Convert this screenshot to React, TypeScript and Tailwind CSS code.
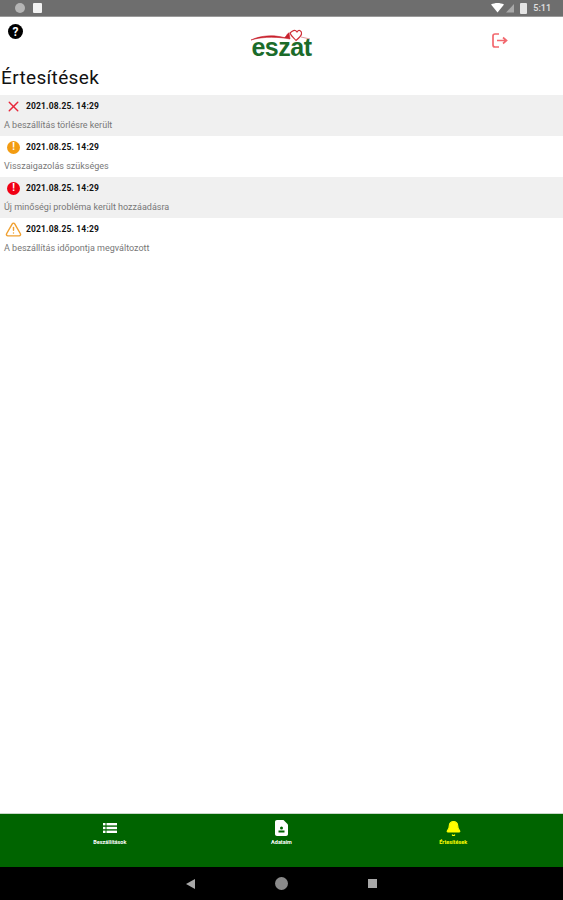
import { AlertTriangle, Bell, X } from "lucide-react"

const font = "font-['Roboto',sans-serif]"

const rows = [
  { icon: "x", text: "A beszállítás törlésre került", bg: "bg-[#f0f0f0]" },
  { icon: "orange", text: "Visszaigazolás szükséges", bg: "bg-white" },
  { icon: "red", text: "Új minőségi probléma került hozzáadásra", bg: "bg-[#f0f0f0]" },
  { icon: "warn", text: "A beszállítás időpontja megváltozott", bg: "bg-white" },
]

function RowIcon({ kind }: { kind: string }) {
  if (kind === "x") return <X className="h-[17px] w-[17px] text-[#e8263a]" strokeWidth={2} />
  if (kind === "warn") return <AlertTriangle className="h-[17px] w-[17px] text-[#f0a030]" strokeWidth={2} />
  const bg = kind === "orange" ? "bg-[#f39c12]" : "bg-[#f00014]"
  return (
    <div className={`flex h-[13px] w-[13px] items-center justify-center rounded-full text-[10px] leading-none font-bold text-white ${bg}`}>
      !
    </div>
  )
}

function Logo() {
  return (
    <div className="relative flex h-[33px] w-[62px] flex-col items-center justify-end">
      <svg className="absolute top-0 left-0" width="62" height="18" viewBox="0 0 62 18" fill="none">
        <path d="M1 14C12 9 24 9 34 11.5C36 12 37 7 39 7L40 13C30 11 14 10 1 14Z" fill="#c8202c" stroke="#c8202c" strokeWidth="0.6" />
        <path d="M40 7C42 5 45 3 47 6C49 3 52 5 51.5 8C51 10 49 12 46 14.5C44 12 41 10 40 7Z" stroke="#d0303a" strokeWidth="1.2" />
        <path d="M51 11L60 13" stroke="#e09aa0" strokeWidth="1" />
      </svg>
      <span className="translate-y-[-1px] text-[25px] leading-[22px] font-bold tracking-[-0.5px] text-[#1b6b2a] font-['Liberation_Sans',sans-serif]">eszat</span>
    </div>
  )
}

function ListIcon() {
  return (
    <svg width="14" height="10" viewBox="0 0 14 10" fill="currentColor">
      <rect x="0" y="0" width="2.5" height="2.4" />
      <rect x="3.5" y="0" width="10.5" height="2.4" />
      <rect x="0" y="3.8" width="2.5" height="2.4" />
      <rect x="3.5" y="3.8" width="10.5" height="2.4" />
      <rect x="0" y="7.6" width="2.5" height="2.4" />
      <rect x="3.5" y="7.6" width="10.5" height="2.4" />
    </svg>
  )
}

function DocIcon() {
  return (
    <svg width="13" height="16" viewBox="0 0 13 16">
      <path d="M2 0H8.5L13 4.5V14C13 15.2 12.2 16 11 16H2C0.8 16 0 15.2 0 14V2C0 0.8 0.8 0 2 0Z" fill="#fff" />
      <circle cx="6.5" cy="8" r="1.5" fill="#006400" />
      <rect x="3.5" y="10.5" width="6" height="2" fill="#006400" />
    </svg>
  )
}

function Tab({ icon, label, active }: { icon: React.ReactNode; label: string; active?: boolean }) {
  return (
    <div className={`flex h-[27px] flex-col items-center justify-between ${active ? "text-[#ffff00]" : "text-white"}`}>
      <div className="flex h-[18px] items-center">{icon}</div>
      <span className="text-[5.5px] leading-[7px] font-bold">{label}</span>
    </div>
  )
}

export default function App() {
  return (
    <div className={`flex h-[900px] w-[563px] flex-col overflow-hidden bg-white ${font}`}>
      <div className="flex h-[17px] shrink-0 items-center justify-between border-b border-[#9a9a9a] bg-[#6e6e6e] pr-[12px] pl-[15px]">
        <div className="flex items-center gap-[8px]">
          <div className="h-[10px] w-[10px] rounded-full bg-[#b5b5b5]" />
          <div className="h-[10px] w-[9px] rounded-[1px] bg-[#f2f2f2]" />
        </div>
        <div className="flex items-center gap-[5px]">
          <svg width="24" height="10" viewBox="0 0 24 10">
            <path d="M0 1.5C4 -0.5 9 -0.5 13 1.5L6.5 9.5Z" fill="#fff" />
            <path d="M23 1V9.5H15Z" fill="#a8a8a8" />
          </svg>
          <div className="h-[11px] w-[7px] rounded-[1px] bg-[#e4e4e4]" />
          <span className="ml-[1px] text-[9px] leading-none font-medium text-[#e0e0e0]">5:11</span>
        </div>
      </div>

      <div className="grid h-[49px] shrink-0 grid-cols-3 items-start">
        <div className="pt-[7px] pl-[8px]">
          <div className="flex h-[15px] w-[15px] items-center justify-center rounded-full bg-black text-[12px] leading-none font-bold text-white">
            ?
          </div>
        </div>
        <div className="flex justify-center pt-[9px]">
          <Logo />
        </div>
        <div className="flex justify-end pt-[16px] pr-[55px]">
          <svg width="16" height="15" viewBox="0 0 16 15" fill="none" stroke="#f2686e" strokeWidth="1.7">
            <path d="M7 1H3C1.8 1 1 1.8 1 3V12C1 13.2 1.8 14 3 14H7" />
            <path d="M5 7.5H14M11 4.5L14.5 7.5L11 10.5" />
          </svg>
        </div>
      </div>

      <h1 className="h-[29px] shrink-0 pl-[1px] text-[19px] leading-[24px] font-normal tracking-[0.35px] text-[#111]">Értesítések</h1>

      <div className="flex flex-col">
        {rows.map((r, i) => (
          <div key={i} className={`flex h-[41px] flex-col ${r.bg}`}>
            <div className="flex h-[22px] items-center">
              <div className="flex w-[26px] items-center justify-center pl-[1px]">
                <RowIcon kind={r.icon} />
              </div>
              <span className="text-[8.5px] leading-none font-bold tracking-[0.15px] text-[#111]">2021.08.25. 14:29</span>
            </div>
            <p className="mt-[2px] pl-[4px] text-[9px] leading-[12px] text-[#777]">{r.text}</p>
          </div>
        ))}
      </div>

      <div className="flex-1" />

      <div className="grid h-[54px] shrink-0 grid-cols-3 items-start border-t border-[#c8d8c8] bg-[#006400] px-[24px] pt-[5px]">
        <Tab icon={<ListIcon />} label="Beszállítások" />
        <Tab icon={<DocIcon />} label="Adataim" />
        <Tab icon={<Bell className="h-[17px] w-[17px] fill-[#ffff00]" strokeWidth={1.5} />} label="Értesítések" active />
      </div>

      <div className="flex h-[33px] shrink-0 items-center justify-center gap-[80px] bg-black">
        <svg width="9" height="10" viewBox="0 0 9 10">
          <path d="M9 0V10L0 5Z" fill="#a8a8a8" />
        </svg>
        <div className="h-[13px] w-[13px] rounded-full bg-[#8a8a8a]" />
        <div className="h-[9px] w-[9px] bg-[#a8a8a8]" />
      </div>
    </div>
  )
}
